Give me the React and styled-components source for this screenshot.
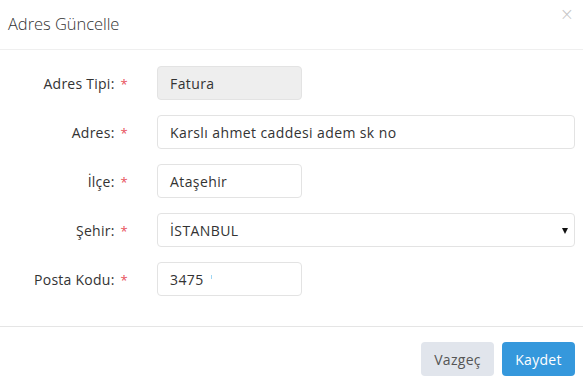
import React from "react";
import styled, { createGlobalStyle } from "styled-components";

const Global = createGlobalStyle`
  html, body { margin: 0; padding: 0; background: #fff; overflow: hidden; }
  body { font-family: "Open Sans", "Liberation Sans", sans-serif; color: #333; }
  * { box-sizing: border-box; }
`;

const Modal = styled.div`
  width: 583px;
  background: #fff;
  display: flex;
  flex-direction: column;
`;

const Header = styled.div`
  flex: 0 0 50px;
  height: 50px;
  padding: 0 8px 2px;
  border-bottom: 1px solid #efefef;
  display: flex;
  align-items: center;
  position: relative;
`;

const Title = styled.h4`
  margin: 0;
  font-size: 16.5px;
  font-weight: 300;
  color: #333;
  line-height: 22px;
  letter-spacing: -0.05px;
`;

const Close = styled.span`
  position: absolute;
  right: 9px;
  top: 4px;
  font-size: 17px;
  color: #c4c4c4;
  font-family: "DejaVu Sans", sans-serif;
  font-weight: 300;
`;

const Body = styled.div`
  flex: 0 0 auto;
  padding: 16px 8px 15px 0;
  border-bottom: 1px solid #e5e5e5;
  display: flex;
  flex-direction: column;
  gap: 15px;
`;

const Row = styled.div`
  display: grid;
  grid-template-columns: 157px 1fr;
  align-items: center;
  height: 34px;
  &:last-child { margin-bottom: 15px; }
`;

const Label = styled.label`
  text-align: right;
  padding-right: 29px;
  font-size: 14px;
  letter-spacing: 0.25px;
  color: #333;
`;

const Req = styled.span`
  color: #e7505a;
  margin-left: 6px;
  font-size: 13px;
`;

const Field = styled.div`
  position: relative;
  width: ${(p) => (p.$wide ? "418px" : "145px")};
  height: 34px;
  border: 1px solid #e3e3e3;
  border-radius: 4px;
  background: ${(p) => (p.$disabled ? "#eeeeee" : "#fff")};
  padding: 0 12px;
  display: flex;
  align-items: center;
  font-size: 14px;
  letter-spacing: 0.4px;
  color: #333;
`;

const Caret = styled.span`
  display: inline-block;
  width: 1px;
  height: 4px;
  background: #9fd6f3;
  margin-left: 7px;
  margin-top: -4px;
`;

const Arrow = styled.span`
  position: absolute;
  right: 6px;
  top: 14px;
  width: 0;
  height: 0;
  border-left: 3.5px solid transparent;
  border-right: 3.5px solid transparent;
  border-top: 6px solid #111;
`;

const Footer = styled.div`
  flex: 0 0 auto;
  display: flex;
  justify-content: flex-end;
  gap: 8px;
  padding: 15px 8px;
`;

const Button = styled.button`
  height: 34px;
  width: 73px;
  border: none;
  border-radius: 4px;
  font-family: "Open Sans", "Liberation Sans", sans-serif;
  font-size: 14px;
  letter-spacing: 0.3px;
  background: ${(p) => (p.$primary ? "#3598dc" : "#e1e5ec")};
  color: ${(p) => (p.$primary ? "#fff" : "#555")};
  padding: 0;
`;

export default function App() {
  return (
    <>
      <Global />
      <Modal>
        <Header>
          <Title>Adres Güncelle</Title>
          <Close>×</Close>
        </Header>
        <Body>
          <Row>
            <Label>Adres Tipi:<Req>*</Req></Label>
            <Field $disabled>Fatura</Field>
          </Row>
          <Row>
            <Label>Adres:<Req>*</Req></Label>
            <Field $wide>Karslı ahmet caddesi adem sk no</Field>
          </Row>
          <Row>
            <Label>İlçe:<Req>*</Req></Label>
            <Field>Ataşehir</Field>
          </Row>
          <Row>
            <Label>Şehir:<Req>*</Req></Label>
            <Field $wide>İSTANBUL<Arrow /></Field>
          </Row>
          <Row>
            <Label>Posta Kodu:<Req>*</Req></Label>
            <Field>3475<Caret /></Field>
          </Row>
        </Body>
        <Footer>
          <Button>Vazgeç</Button>
          <Button $primary>Kaydet</Button>
        </Footer>
      </Modal>
    </>
  );
}
